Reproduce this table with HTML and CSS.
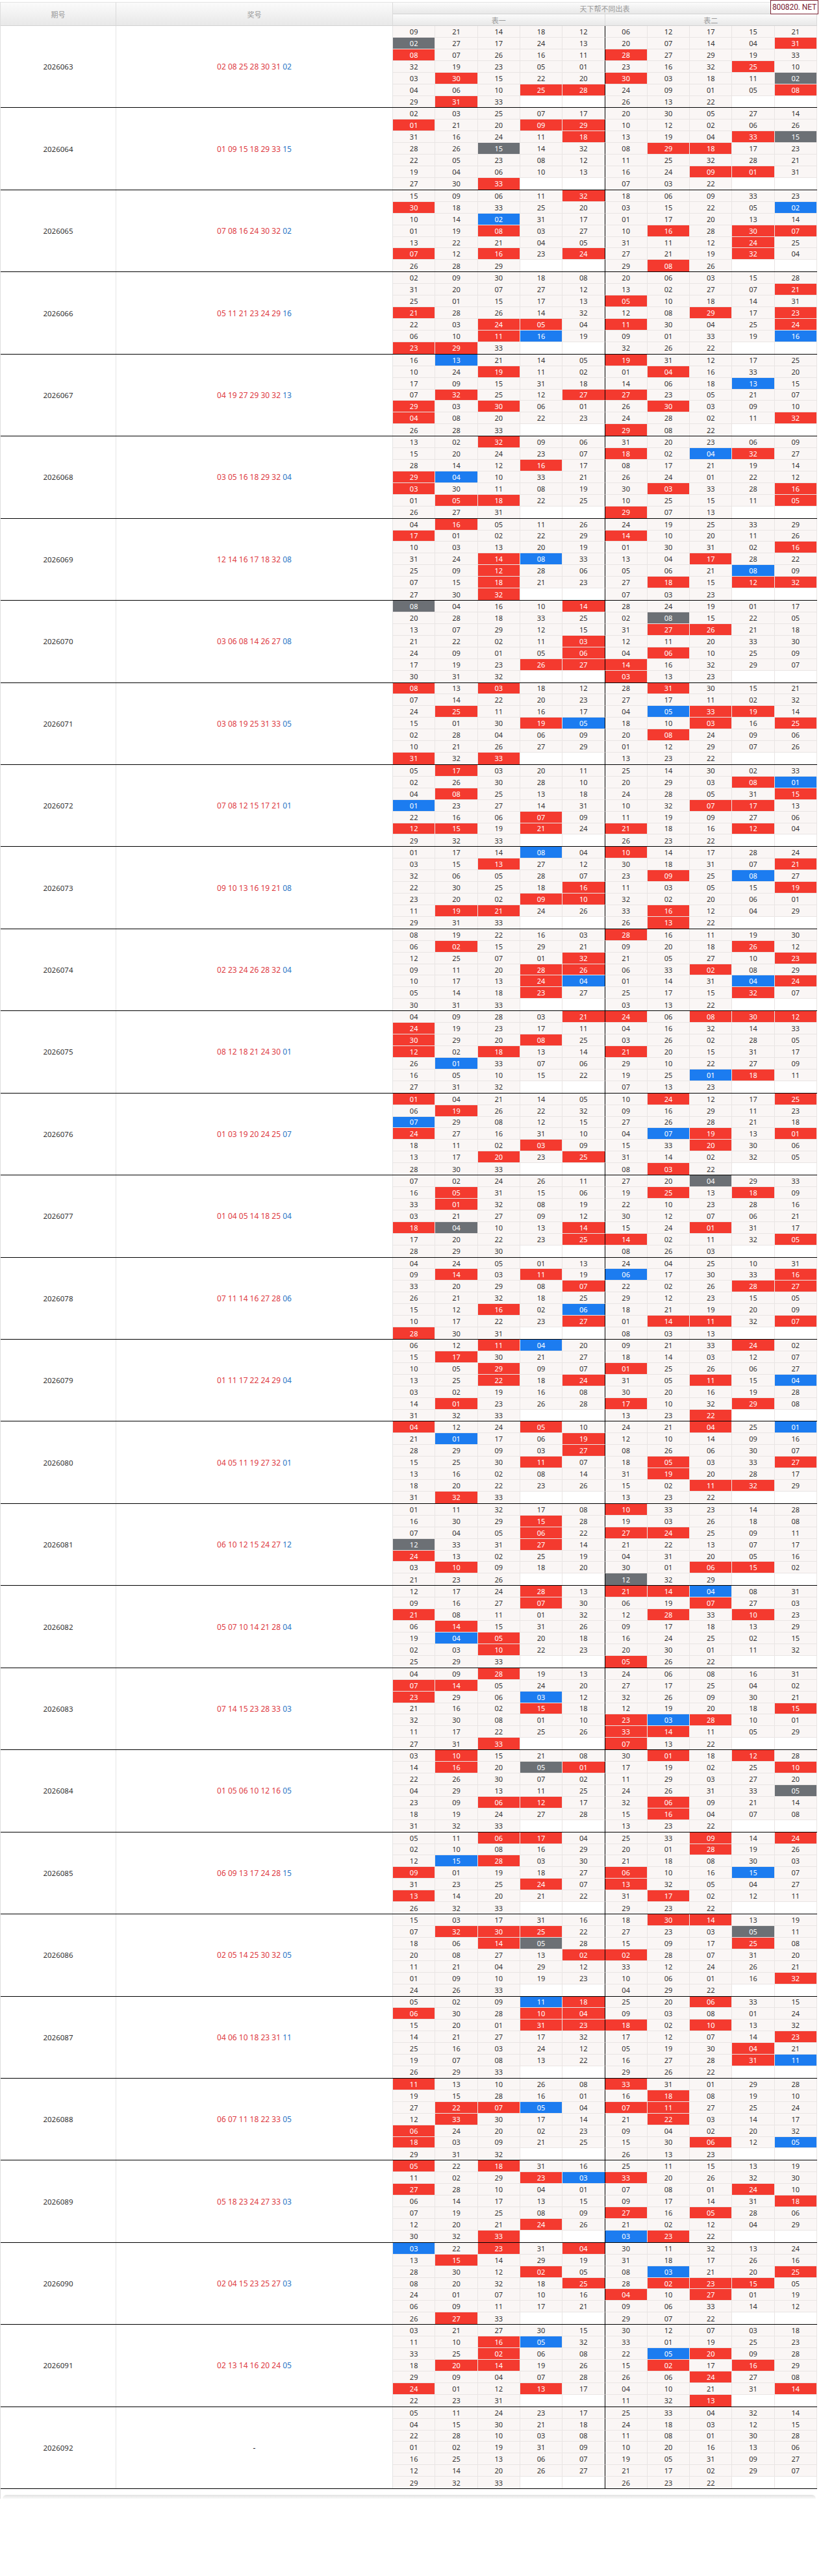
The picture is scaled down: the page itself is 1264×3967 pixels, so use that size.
FILE: index.html
```html
<!DOCTYPE html>
<html lang="zh-CN">
<head>
<meta charset="utf-8">
<title>天下帮不同出表</title>
<link rel="stylesheet" href="styles.css">
</head>
<body>
<div class="sheet">
  <div class="badge">800820. NET</div>
  <div class="thead">
    <div class="th th-no">期号</div>
    <div class="th th-win">奖号</div>
    <div class="th th-title">天下帮不同出表</div>
    <div class="th th-t1">表一</div>
    <div class="th th-t2">表二</div>
  </div>
  <div id="tbody" class="tbody"></div>
  <div class="foot"></div>
</div>
<script src="script.js"></script>
</body>
</html>
```

FILE: styles.css
```css
html, body {
  margin: 0;
  padding: 0;
  background: #fff;
}
body {
  font-family: "Noto Sans", "Noto Sans CJK SC", sans-serif;
  color: #333;
}
.sheet {
  position: relative;
  width: 1258px;
  margin-top: 3px;
  box-sizing: border-box;
  border-left: 1px solid #dedede;
}
.badge {
  position: absolute;
  top: -3px;
  right: -2px;
  width: 74px;
  height: 22px;
  box-sizing: border-box;
  border: 1px solid #7a2131;
  background: #fff;
  color: #7a2131;
  font-family: Roboto, "Liberation Sans", sans-serif;
  font-size: 12px;
  white-space: nowrap;
  letter-spacing: -0.1px;
  display: flex;
  align-items: center;
  justify-content: center;
  z-index: 2;
}
.thead,
.period {
  display: grid;
  grid-template-columns: 178px 426px repeat(10, 1fr);
}
.thead {
  grid-template-rows: 18px 18px;
  border-top: 1px solid #e3e3e3;
}
.th {
  background: linear-gradient(#fbfbfb, #e8e8e8);
  border-right: 1px solid #dadada;
  border-bottom: 1px solid #d2d2d2;
  box-sizing: border-box;
  color: #9a9a9a;
  font-family: "Noto Sans CJK SC", "Noto Sans", sans-serif;
  font-size: 11px;
  display: flex;
  align-items: center;
  justify-content: center;
}
.th-no { grid-column: 1; grid-row: 1 / 3; }
.th-win { grid-column: 2; grid-row: 1 / 3; }
.th-title { grid-column: 3 / 13; grid-row: 1; }
.th-t1 { grid-column: 3 / 8; grid-row: 2; }
.th-t2 { grid-column: 8 / 13; grid-row: 2; }

.period {
  grid-template-rows: repeat(7, 1fr);
  height: 126.45px;
  box-sizing: border-box;
  border-bottom: 1px solid #000;
}
.pno,
.win {
  grid-row: 1 / 8;
  display: flex;
  align-items: center;
  justify-content: center;
  border-right: 1px solid #e4e4e4;
  background: #fff;
}
.pno {
  grid-column: 1;
  font-size: 11.5px;
  color: #333;
}
.win {
  grid-column: 2;
  font-size: 12px;
  color: #222;
}
.wr { color: #de3a3f; }
.wb { color: #2a76c6; }

.c {
  display: flex;
  align-items: center;
  justify-content: center;
  box-sizing: border-box;
  border-right: 1px solid #e9e5e4;
  border-bottom: 1px solid #e9e5e4;
  background: #faf6f5;
  color: #333;
  font-size: 11px;
}
.c.last { border-bottom: none; }
.c.mid { border-right: 1px solid #000; }
.c.e { background: #fff; }
.c.r { background: #f43a2f; color: #fff; }
.c.b { background: #1c7cf0; color: #fff; }
.c.g { background: #6c7075; color: #fff; }

.foot {
  margin: 9px 0 0 3px;
  width: 1252px;
  height: 6px;
  border-radius: 6px 6px 0 0;
  background: linear-gradient(#e2e2e2, #f9f9f9);
}
```

FILE: script.js
```js
var DATA = [
["2026063","02 08 25 28 30 31","02",[
"09 21 14 18 12 06 12 17 15 21",
"02 27 17 24 13 20 07 14 04 31",
"08 07 26 16 11 28 27 29 19 33",
"32 19 23 05 01 23 16 32 25 10",
"03 30 15 22 20 30 03 18 11 02",
"04 06 10 25 28 24 09 01 05 08",
"29 31 33 . . 26 13 22 . ."]],
["2026064","01 09 15 18 29 33","15",[
"02 03 25 07 17 20 30 05 27 14",
"01 21 20 09 29 10 12 02 06 26",
"31 16 24 11 18 13 19 04 33 15",
"28 26 15 14 32 08 29 18 17 23",
"22 05 23 08 12 11 25 32 28 21",
"19 04 06 10 13 16 24 09 01 31",
"27 30 33 . . 07 03 22 . ."]],
["2026065","07 08 16 24 30 32","02",[
"15 09 06 11 32 18 06 09 33 23",
"30 18 33 25 20 03 15 22 05 02",
"10 14 02 31 17 01 17 20 13 14",
"01 19 08 03 27 10 16 28 30 07",
"13 22 21 04 05 31 11 12 24 25",
"07 12 16 23 24 27 21 19 32 04",
"26 28 29 . . 29 08 26 . ."]],
["2026066","05 11 21 23 24 29","16",[
"02 09 30 18 08 20 06 03 15 28",
"31 20 07 27 12 13 02 27 07 21",
"25 01 15 17 13 05 10 18 14 31",
"21 28 26 14 32 12 08 29 17 23",
"22 03 24 05 04 11 30 04 25 24",
"06 10 11 16 19 09 01 33 19 16",
"23 29 33 . . 32 26 22 . ."]],
["2026067","04 19 27 29 30 32","13",[
"16 13 21 14 05 19 31 12 17 25",
"10 24 19 11 02 01 04 16 33 20",
"17 09 15 31 18 14 06 18 13 15",
"07 32 25 12 27 27 23 05 21 07",
"29 03 30 06 01 26 30 03 09 10",
"04 08 20 22 23 24 28 02 11 32",
"26 28 33 . . 29 08 22 . ."]],
["2026068","03 05 16 18 29 32","04",[
"13 02 32 09 06 31 20 23 06 09",
"15 20 24 23 07 18 02 04 32 27",
"28 14 12 16 17 08 17 21 19 14",
"29 04 10 33 21 26 24 01 22 12",
"03 30 11 08 19 30 03 33 28 16",
"01 05 18 22 25 10 25 15 11 05",
"26 27 31 . . 29 07 13 . ."]],
["2026069","12 14 16 17 18 32","08",[
"04 16 05 11 26 24 19 25 33 29",
"17 01 02 22 29 14 10 20 11 26",
"10 03 13 20 19 01 30 31 02 16",
"31 24 14 08 33 13 04 17 28 22",
"25 09 12 28 06 05 06 21 08 09",
"07 15 18 21 23 27 18 15 12 32",
"27 30 32 . . 07 03 23 . ."]],
["2026070","03 06 08 14 26 27","08",[
"08 04 16 10 14 28 24 19 01 17",
"20 28 18 33 25 02 08 15 22 05",
"13 07 29 12 15 31 27 26 21 18",
"21 22 02 11 03 12 11 20 33 30",
"24 09 01 05 06 04 06 10 25 09",
"17 19 23 26 27 14 16 32 29 07",
"30 31 32 . . 03 13 23 . ."]],
["2026071","03 08 19 25 31 33","05",[
"08 13 03 18 12 28 31 30 15 21",
"07 14 22 20 23 27 17 11 02 32",
"24 25 11 16 17 04 05 33 19 14",
"15 01 30 19 05 18 10 03 16 25",
"02 28 04 06 09 20 08 24 09 06",
"10 21 26 27 29 01 12 29 07 26",
"31 32 33 . . 13 23 22 . ."]],
["2026072","07 08 12 15 17 21","01",[
"05 17 03 20 11 25 14 30 02 33",
"02 26 30 28 10 20 29 03 08 01",
"04 08 25 13 18 24 28 05 31 15",
"01 23 27 14 31 10 32 07 17 13",
"22 16 06 07 09 11 19 09 27 06",
"12 15 19 21 24 21 18 16 12 04",
"29 32 33 . . 26 23 22 . ."]],
["2026073","09 10 13 16 19 21","08",[
"01 17 14 08 04 10 14 17 28 24",
"03 15 13 27 12 30 18 31 07 21",
"32 06 05 28 07 23 09 25 08 27",
"22 30 25 18 16 11 03 05 15 19",
"23 20 02 09 10 32 02 20 06 01",
"11 19 21 24 26 33 16 12 04 29",
"29 31 33 . . 26 13 22 . ."]],
["2026074","02 23 24 26 28 32","04",[
"08 19 22 16 03 28 16 11 19 30",
"06 02 15 29 21 09 20 18 26 12",
"12 25 07 01 32 21 05 27 10 23",
"09 11 20 28 26 06 33 02 08 29",
"10 17 13 24 04 01 14 31 04 24",
"05 14 18 23 27 25 17 15 32 07",
"30 31 33 . . 03 13 22 . ."]],
["2026075","08 12 18 21 24 30","01",[
"04 09 28 03 21 24 06 08 30 12",
"24 19 23 17 11 04 16 32 14 33",
"30 29 20 08 25 03 26 02 28 05",
"12 02 18 13 14 21 20 15 31 17",
"26 01 33 07 06 29 10 22 27 09",
"16 05 10 15 22 19 25 01 18 11",
"27 31 32 . . 07 13 23 . ."]],
["2026076","01 03 19 20 24 25","07",[
"01 04 21 14 05 10 24 12 17 25",
"06 19 26 22 32 09 16 29 11 23",
"07 29 08 12 15 27 26 28 21 18",
"24 27 16 31 10 04 07 19 13 01",
"18 11 02 03 09 15 33 20 30 06",
"13 17 20 23 25 31 14 02 32 05",
"28 30 33 . . 08 03 22 . ."]],
["2026077","01 04 05 14 18 25","04",[
"07 02 24 26 11 27 20 04 29 33",
"16 05 31 15 06 19 25 13 18 09",
"33 01 32 08 19 22 10 23 28 16",
"03 21 27 09 12 30 12 07 06 21",
"18 04 10 13 14 15 24 01 31 17",
"17 20 22 23 25 14 02 11 32 05",
"28 29 30 . . 08 26 03 . ."]],
["2026078","07 11 14 16 27 28","06",[
"04 24 05 01 13 24 04 25 10 31",
"09 14 03 11 19 06 17 30 33 16",
"33 20 29 08 07 22 02 26 28 27",
"26 21 32 18 25 29 12 23 15 05",
"15 12 16 02 06 18 21 19 20 09",
"10 17 22 23 27 01 14 11 32 07",
"28 30 31 . . 08 03 13 . ."]],
["2026079","01 11 17 22 24 29","04",[
"06 12 11 04 20 09 21 33 24 02",
"15 17 30 21 27 18 14 03 12 07",
"10 05 29 09 07 01 25 26 06 27",
"13 25 22 18 24 31 05 11 15 04",
"03 02 19 16 08 30 20 16 19 28",
"14 01 23 26 28 17 10 32 29 08",
"31 32 33 . . 13 23 22 . ."]],
["2026080","04 05 11 19 27 32","01",[
"04 12 24 05 10 24 21 04 25 01",
"21 01 17 06 19 12 10 14 09 16",
"28 29 09 03 27 08 26 06 30 07",
"15 25 30 11 07 18 05 03 33 27",
"13 16 02 08 14 31 19 20 28 17",
"18 20 22 23 26 15 02 11 32 29",
"31 32 33 . . 13 23 22 . ."]],
["2026081","06 10 12 15 24 27","12",[
"01 11 32 17 08 10 33 23 14 28",
"16 30 29 15 28 19 03 26 18 08",
"07 04 05 06 22 27 24 25 09 11",
"12 33 31 27 14 21 22 13 07 17",
"24 13 02 25 19 04 31 20 05 16",
"03 10 09 18 20 30 01 06 15 02",
"21 23 26 . . 12 32 29 . ."]],
["2026082","05 07 10 14 21 28","04",[
"12 17 24 28 13 21 14 04 08 31",
"09 16 27 07 30 06 19 07 27 03",
"21 08 11 01 32 12 28 33 10 23",
"06 14 15 31 26 09 17 18 13 29",
"19 04 05 20 18 16 24 25 02 15",
"02 03 10 22 23 20 30 01 11 32",
"25 29 33 . . 05 26 22 . ."]],
["2026083","07 14 15 23 28 33","03",[
"04 09 28 19 13 24 06 08 16 31",
"07 14 05 24 20 27 17 25 04 02",
"23 29 06 03 12 32 26 09 30 21",
"21 16 02 15 18 12 19 20 18 15",
"32 30 08 01 10 23 03 28 10 01",
"11 17 22 25 26 33 14 11 05 29",
"27 31 33 . . 07 13 22 . ."]],
["2026084","01 05 06 10 12 16","05",[
"03 10 15 21 08 30 01 18 12 28",
"14 16 20 05 01 17 19 02 25 10",
"22 26 30 07 02 11 29 03 27 20",
"04 29 13 11 25 24 26 31 33 05",
"23 09 06 12 17 32 06 09 21 14",
"18 19 24 27 28 15 16 04 07 08",
"31 32 33 . . 13 23 22 . ."]],
["2026085","06 09 13 17 24 28","15",[
"05 11 06 17 04 25 33 09 14 24",
"02 10 08 16 29 20 01 28 19 26",
"12 15 28 03 30 21 18 08 30 03",
"09 01 19 18 27 06 10 16 15 07",
"31 23 25 24 07 13 32 05 04 27",
"13 14 20 21 22 31 17 02 12 11",
"26 32 33 . . 29 23 22 . ."]],
["2026086","02 05 14 25 30 32","05",[
"15 03 17 31 16 18 30 14 13 19",
"07 32 30 25 22 27 23 03 05 11",
"18 06 14 05 28 15 09 17 25 08",
"20 08 27 13 02 02 28 07 31 20",
"11 21 04 29 12 33 12 24 26 21",
"01 09 10 19 23 10 06 01 16 32",
"24 26 33 . . 04 29 22 . ."]],
["2026087","04 06 10 18 23 31","11",[
"05 02 09 11 18 25 20 06 33 15",
"06 30 28 10 04 09 03 08 01 24",
"15 20 01 31 23 18 02 10 13 32",
"14 21 27 17 32 17 12 07 14 23",
"25 16 03 24 12 05 19 30 04 21",
"19 07 08 13 22 16 27 28 31 11",
"26 29 33 . . 29 26 22 . ."]],
["2026088","06 07 11 18 22 33","05",[
"11 13 10 26 08 33 31 01 29 28",
"19 15 28 16 01 16 18 08 19 10",
"27 22 07 05 04 07 11 27 25 24",
"12 33 30 17 14 21 22 03 14 17",
"06 24 20 02 23 09 04 02 20 32",
"18 03 09 21 25 15 30 06 12 05",
"29 31 32 . . 26 13 23 . ."]],
["2026089","05 18 23 24 27 33","03",[
"05 22 18 31 16 25 11 15 13 19",
"11 02 29 23 03 33 20 26 32 30",
"27 28 10 04 01 07 08 01 24 10",
"06 14 17 13 15 09 17 14 31 18",
"07 19 25 08 09 27 16 05 28 06",
"12 20 21 24 26 21 02 12 04 29",
"30 32 33 . . 03 23 22 . ."]],
["2026090","02 04 15 23 25 27","03",[
"03 22 23 31 04 30 11 32 13 24",
"13 15 14 29 19 31 18 17 26 16",
"28 30 12 02 05 08 03 21 20 25",
"08 20 32 18 25 28 02 23 15 05",
"24 01 07 10 16 04 10 27 01 19",
"06 09 11 17 21 09 06 33 14 12",
"26 27 33 . . 29 07 22 . ."]],
["2026091","02 13 14 16 20 24","05",[
"03 21 27 30 15 30 12 07 03 18",
"11 10 16 05 32 33 01 19 25 23",
"33 25 02 06 08 22 05 20 09 28",
"18 20 14 19 26 15 02 17 16 29",
"29 09 04 07 28 26 06 24 27 08",
"24 01 12 13 17 04 10 21 31 14",
"22 23 31 . . 11 32 13 . ."]],
["2026092","","",[
"05 11 24 23 17 25 33 04 32 14",
"04 15 30 21 18 24 18 03 12 15",
"22 28 10 03 08 11 08 01 30 28",
"01 02 19 31 09 10 20 16 13 06",
"16 25 13 06 07 19 05 31 09 27",
"12 14 20 26 27 21 17 02 29 07",
"29 32 33 . . 26 23 22 . ."]]
];

(function () {
  var tbody = document.getElementById("tbody");
  DATA.forEach(function (p) {
    var reds = p[1] ? p[1].split(" ") : [];
    var blue = p[2];
    var period = document.createElement("div");
    period.className = "period";

    var no = document.createElement("div");
    no.className = "pno";
    no.textContent = p[0];
    period.appendChild(no);

    var win = document.createElement("div");
    win.className = "win";
    var line = document.createElement("span");
    if (reds.length) {
      var r = document.createElement("span");
      r.className = "wr";
      r.textContent = reds.join(" ");
      var b = document.createElement("span");
      b.className = "wb";
      b.textContent = blue;
      line.appendChild(r);
      line.appendChild(document.createTextNode(" "));
      line.appendChild(b);
    } else {
      line.textContent = "-";
    }
    win.appendChild(line);
    period.appendChild(win);

    p[3].forEach(function (row, i) {
      row.split(" ").forEach(function (n, j) {
        var c = document.createElement("div");
        var cls = "c";
        if (i === 6) cls += " last";
        if (j === 4) cls += " mid";
        if (n === ".") {
          cls += " e";
        } else {
          var isRed = reds.indexOf(n) >= 0;
          var isBlue = blue === n;
          if (isRed && isBlue) cls += " g";
          else if (isRed) cls += " r";
          else if (isBlue) cls += " b";
          c.textContent = n;
        }
        c.className = cls;
        period.appendChild(c);
      });
    });
    tbody.appendChild(period);
  });
})();
```
